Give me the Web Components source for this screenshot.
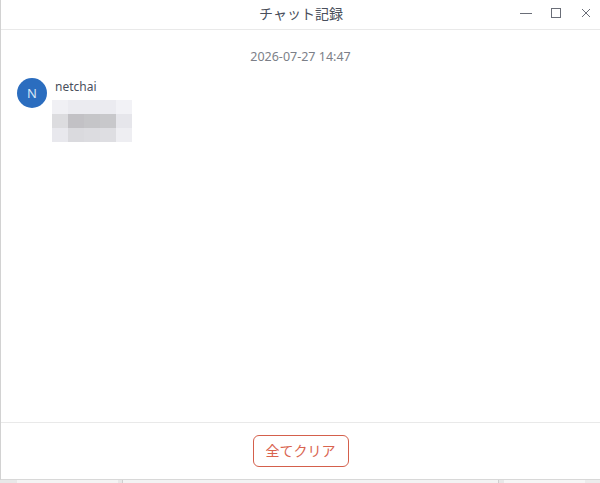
<!DOCTYPE html>
<html lang="ja">
<head>
<meta charset="utf-8">
<title>チャット記録</title>
<style>
  html, body { margin: 0; height: 100%; background: #fff; overflow: hidden; }
  body { font-family: "Noto Sans", "Noto Sans CJK JP", sans-serif; }
</style>
</head>
<body>
<chat-window heading="チャット記録">
  <chat-time>2026-07-27 14:47</chat-time>
  <chat-message name="netchai" initial="N"></chat-message>
  <clear-button slot="footer">全てクリア</clear-button>
</chat-window>
<script>
class ChatWindow extends HTMLElement {
  constructor() {
    super();
    this.attachShadow({ mode: 'open' });
    this.shadowRoot.innerHTML = `
      <style>
        :host {
          display: grid;
          grid-template-rows: 30px 1fr 58px 3px;
          height: 483px;
          box-sizing: border-box;
          border-left: 1px solid #d2d2d2;
          color: #414d68;
        }
        .titlebar {
          display: grid;
          grid-template-columns: 1fr auto 1fr;
          align-items: center;
          border-bottom: 1px solid #e9e9e9;
          padding-bottom: 1px;
        }
        .title {
          grid-column: 2;
          font-size: 14px;
          line-height: 28px;
          color: #4a4f5c;
          padding-left: 1px;
        }
        .controls {
          display: flex;
          justify-content: flex-end;
          gap: 18px;
          padding: 0 8px 2px 0;
        }
        .controls svg { display: block; width: 12px; height: 12px; }
        .body { display: flex; flex-direction: column; min-height: 0; }
        .footer {
          display: flex;
          justify-content: center;
          align-items: flex-start;
          padding-top: 12px;
          box-sizing: border-box;
          border-top: 1px solid #e9e9e9;
          border-bottom: 1px solid #d8d8d8;
        }
        .strip {
          display: grid;
          grid-template-columns: 17px 101px 4px 1px 375px 1px 5px 81px 1fr;
          margin-left: -1px;
        }
      </style>
      <div class="titlebar">
        <div class="title">${this.getAttribute('heading')}</div>
        <div class="controls">
          <svg viewBox="0 0 12 12" fill="none" stroke="#6a6e78" stroke-width="1"><path d="M0 6.5h12"/></svg>
          <svg viewBox="0 0 12 12" fill="none" stroke="#6a6e78" stroke-width="1"><rect x="1.5" y="1.5" width="9" height="9"/></svg>
          <svg viewBox="0 0 12 12" fill="none" stroke="#6a6e78" stroke-width="1"><path d="M2 2l8 8M10 2l-8 8"/></svg>
        </div>
      </div>
      <div class="body"><slot></slot></div>
      <div class="footer"><slot name="footer"></slot></div>
      <div class="strip">
        <i style="background:#e8e8e8"></i><i style="background:#f4f4f4"></i><i style="background:#e8e8e8"></i><i style="background:#cfcfcf"></i>
        <i style="background:#f3f3f3"></i><i style="background:#cfcfcf"></i><i style="background:#e8e8e8"></i><i style="background:#f6f6f6"></i><i style="background:#ececec"></i>
      </div>
    `;
  }
}

class ChatTime extends HTMLElement {
  constructor() {
    super();
    this.attachShadow({ mode: 'open' });
    this.shadowRoot.innerHTML = `
      <style>
        :host {
          display: block;
          margin-top: 18px;
          text-align: center;
          font-size: 12.5px;
          line-height: 18px;
          color: #7c7f88;
        }
      </style>
      <slot></slot>
    `;
  }
}

class ChatMessage extends HTMLElement {
  constructor() {
    super();
    this.attachShadow({ mode: 'open' });
    // blurred picture in the bubble: mosaic of 5x3 gray blocks
    const cells = ['#f0f0f4', '#ebebf0', '#ebebf0', '#ebebf0', '#f2f2f6',
      '#dcdcdf', '#c2c1c5', '#c5c5c8', '#c8c8cb', '#e6e6eb',
      '#e8e8ed', '#dadade', '#dcdce0', '#dedee2', '#eeeef2'];
    this.shadowRoot.innerHTML = `
      <style>
        :host {
          display: flex;
          align-items: flex-start;
          gap: 5px;
          margin: 12px 0 0 16px;
        }
        .avatar {
          width: 30px;
          height: 30px;
          border-radius: 50%;
          background: #2b6dbf;
          color: #d8e6f6;
          font-size: 13px;
          line-height: 30px;
          text-align: center;
          flex: none;
        }
        .name {
          font-size: 12px;
          line-height: 18px;
          color: #4a4f5c;
          margin: 0 0 4px 3px;
        }
        .mosaic {
          display: grid;
          grid-template-columns: repeat(5, 16px);
          grid-template-rows: repeat(3, 14px);
        }
      </style>
      <div class="avatar">${this.getAttribute('initial')}</div>
      <div>
        <div class="name">${this.getAttribute('name')}</div>
        <div class="mosaic">${cells.map(c => `<i style="background:${c}"></i>`).join('')}</div>
      </div>
    `;
  }
}

class ClearButton extends HTMLElement {
  constructor() {
    super();
    this.attachShadow({ mode: 'open' });
    this.shadowRoot.innerHTML = `
      <style>
        :host {
          display: block;
          box-sizing: border-box;
          width: 96px;
          height: 32px;
          border: 1px solid #d4604c;
          border-radius: 6px;
          background: #fff;
          color: #d9644f;
          font-size: 14px;
          line-height: 30px;
          text-align: center;
        }
      </style>
      <slot></slot>
    `;
  }
}

customElements.define('chat-window', ChatWindow);
customElements.define('chat-time', ChatTime);
customElements.define('chat-message', ChatMessage);
customElements.define('clear-button', ClearButton);
</script>
</body>
</html>
